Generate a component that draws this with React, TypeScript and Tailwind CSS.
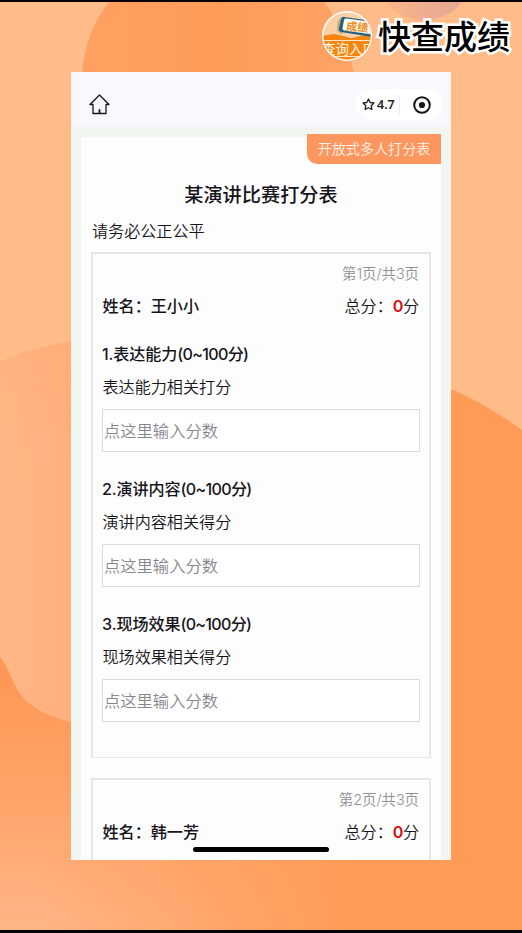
import React from 'react';

interface Criterion {
  title: string;
  range: string;
  hint: string;
}

interface Contestant {
  page: number;
  name: string;
  criteria: Criterion[];
}

const contestants: Contestant[] = [
  {
    page: 1,
    name: '王小小',
    criteria: [
      { title: '1.表达能力', range: '(0~100分)', hint: '表达能力相关打分' },
      { title: '2.演讲内容', range: '(0~100分)', hint: '演讲内容相关得分' },
      { title: '3.现场效果', range: '(0~100分)', hint: '现场效果相关得分' },
    ],
  },
  { page: 2, name: '韩一芳', criteria: [] },
];

function Backdrop() {
  return (
    <svg className="absolute inset-0 h-full w-full" viewBox="0 2 522 928" preserveAspectRatio="none">
      <defs>
        <linearGradient id="blob" x1="0" y1="0" x2="1" y2="0">
          <stop offset="0" stopColor="#ffb886" />
          <stop offset="1" stopColor="#ffae7a" />
        </linearGradient>
        <linearGradient id="blobTop" x1="0" y1="0" x2="0" y2="1">
          <stop offset="0" stopColor="#ffa870" stopOpacity="0.35" />
          <stop offset="0.4" stopColor="#ffb27d" stopOpacity="0" />
        </linearGradient>
        <linearGradient id="floor" x1="0" y1="657" x2="0" y2="930" gradientUnits="userSpaceOnUse">
          <stop offset="0" stopColor="#fe9654" />
          <stop offset="0.4" stopColor="#ffa064" />
          <stop offset="1" stopColor="#ffb584" />
        </linearGradient>
        <linearGradient id="floorRight" x1="40" y1="0" x2="360" y2="0" gradientUnits="userSpaceOnUse">
          <stop offset="0" stopColor="#ff9a57" stopOpacity="0" />
          <stop offset="1" stopColor="#ff9a57" />
        </linearGradient>
        <linearGradient id="sun" x1="0" y1="0" x2="1" y2="0">
          <stop offset="0" stopColor="#ffa163" />
          <stop offset="0.5" stopColor="#fe9b58" />
          <stop offset="1" stopColor="#ffa367" />
        </linearGradient>
        <linearGradient id="dusk" x1="0" y1="0" x2="1" y2="0">
          <stop offset="0" stopColor="#fbb488" />
          <stop offset="1" stopColor="#e2a795" />
        </linearGradient>
      </defs>
      <rect width="522" height="933" fill="#ffbb88" />
      <path d="M82 75C84 48 93 18 112 0H322C340 20 350 48 354 75Z" fill="url(#sun)" />
      <path d="M386 0H463C456 12 440 20 424 20C408 20 392 12 386 0Z" fill="url(#dusk)" />
      <path d="M0 361C28 350 52 344 80 340V730H0Z" fill="url(#blob)" />
      <path d="M0 361C28 350 52 344 80 340V730H0Z" fill="url(#blobTop)" />
      <path d="M0 657C10 668 13 691 30 704C43 714 56 719 75 723V850H522V933H0Z" fill="url(#floor)" />
      <path d="M75 850H522V933H0V850Z" fill="url(#floorRight)" />
      <path d="M445 387C472 397 498 413 522 430V933H445Z" fill="#ff9a57" />
    </svg>
  );
}

function AppLogo() {
  return (
    <svg className="h-[50px] w-[50px]" viewBox="0 0 50 50">
      <defs>
        <clipPath id="logoClip">
          <circle cx="25" cy="25" r="23.5" />
        </clipPath>
      </defs>
      <circle cx="25" cy="25" r="25" fill="#fff" />
      <g clipPath="url(#logoClip)">
        <rect width="50" height="50" fill="#fbd0a6" />
        <path d="M15 12Q17 6 24 6L20 24L15 20Z" fill="#d9ad72" />
        <path d="M0 25L12 23L30 27L50 22V50H0Z" fill="#f6860f" />
        <path d="M20 23L32 23L28 27Z" fill="#fbd0a6" />
        <path d="M22 6L50 10V26L19 21Q16 20 17 17L19 8Q20 5 22 6Z" fill="#1f6282" />
        <path d="M24 7.5L50 11V23.500L22 19.500Q20 19 20.500 17L22 9Q22.500 7 24 7.500Z" fill="#fffaf3" />
        <text x="24" y="19" fontSize="11" fontWeight="700" fill="#ee8b1d" fontFamily="Noto Sans CJK SC, sans-serif" transform="rotate(5 24 19)">成绩</text>
        <path d="M0 29.500H50" stroke="#fff1df" strokeWidth="0.9" />
        <path d="M0 45.500H50" stroke="#fff1df" strokeWidth="0.9" />
        <text x="0" y="43" fontSize="13.5" fill="#fff6e6" fontFamily="Noto Sans CJK SC, sans-serif">查询入口</text>
      </g>
    </svg>
  );
}

function NavBar() {
  return (
    <header className="flex h-[55px] shrink-0 items-center justify-between bg-[#faf8fc] pt-[10px] pr-[8px] pl-[18px]">
      <svg className="h-[21px] w-[21px]" viewBox="0 0 21 21" fill="none" stroke="#17151b" strokeWidth="1.3" strokeLinejoin="round" strokeLinecap="round">
        <path d="M10.5 1L1 10.5H4V19.5H17V10.5H20Z" />
        <path d="M10.5 16V19" strokeWidth="1.8" />
      </svg>
      <div className="flex h-[31px] w-[87px] items-center rounded-full bg-white">
        <svg className="ml-[6px] h-[13px] w-[13px]" viewBox="0 0 24 24" fill="none" stroke="#222" strokeWidth="2.5" strokeLinejoin="round">
          <path d="M12 2L15.1 8.3L22 9.3L17 14.2L18.2 21.2L12 18L5.8 21.2L7 14.2L2 9.3L8.9 8.3Z" />
        </svg>
        <span className="ml-[2px] w-[19px] pt-px font-['Noto_Sans'] text-[12.5px] leading-none font-semibold text-[#222]">4.7</span>
        <span className="ml-[3px] h-[20px] w-px bg-[#f0eef1]" />
        <svg className="ml-[13px] h-[18px] w-[18px]" viewBox="0 0 18 18">
          <circle cx="9" cy="9" r="7.8" fill="none" stroke="#17151b" strokeWidth="2" />
          <circle cx="9" cy="9" r="3.1" fill="#17151b" />
        </svg>
      </div>
    </header>
  );
}

function ScoreField({ title, range, hint }: Criterion) {
  return (
    <div className="mb-[20.8px]">
      <h3 className="-ml-px h-[33px] text-[16.1px] leading-[33px] font-medium tracking-[-0.1px] whitespace-nowrap">
        {title}
        <span className="tracking-[-0.7px]">{range}</span>
      </h3>
      <p className="-ml-[0.5px] h-[38px] text-[16.1px] leading-[33px] font-[350]">{hint}</p>
      <input
        className="-ml-px block h-[43px] w-[318px] border border-[#dcdadd] bg-white p-0 pt-px pl-px text-[16.3px] font-[350] outline-none placeholder:text-[#88868c] placeholder:opacity-100"
        placeholder="点这里输入分数"
      />
    </div>
  );
}

function ScoreCard({ page, name, criteria }: Contestant) {
  return (
    <section className="mb-[20px] h-[506px] shrink-0 border-t-2 border-r-2 border-b border-l-2 border-[#e7e6e8] pt-[6px] pr-[10px] pl-[10px]">
      <p className="h-[28px] text-right text-[14.4px] leading-[28px] font-[350] text-[#929095]">第{page}页/共3页</p>
      <div className="mb-[15px] flex h-[35px] items-center justify-between pt-px text-[16.1px]">
        <span className="-ml-[0.5px] font-medium">姓名：{name}</span>
        <span className="font-[350]">
          总分：<span className="font-semibold tracking-[-0.5px] text-[#d81012]">0</span>分
        </span>
      </div>
      {criteria.map((item) => (
        <ScoreField key={item.title} {...item} />
      ))}
    </section>
  );
}

export default function App() {
  return (
    <div className="relative h-[933px] w-[522px] overflow-hidden border-t-2 border-b-[3px] border-black bg-[#ffbb88] font-[Inter,'Noto_Sans_CJK_SC',sans-serif] text-[#17151b]">
      <Backdrop />
      <div className="relative flex h-[70px] items-start justify-end pt-[9px] pr-[12px]">
        <AppLogo />
        <h1 className="ml-[6px] text-[33px] leading-[52px] font-medium text-black [paint-order:stroke_fill] [-webkit-text-stroke:5px_white]">快查成绩</h1>
      </div>

      <div className="relative ml-[71px] flex h-[788px] w-[380px] flex-col overflow-hidden bg-[#f1f6f0]">
        <NavBar />
        <main className="relative mx-[10px] mt-[10px] flex flex-1 flex-col bg-[#fefdfe] px-[10px]">
          <div className="absolute -top-[3px] right-0 h-[30px] w-[134px] rounded-bl-[10px] bg-[#fe965f] text-center text-[14.1px] leading-[30px] font-[350] text-[#fff3e9]">开放式多人打分表</div>
          <h2 className="mt-[41px] h-[35px] shrink-0 text-center text-[19.2px] leading-[35px] font-medium">某演讲比赛打分表</h2>
          <p className="h-[39px] shrink-0 pl-px text-[16.1px] leading-[36px] font-[350]">请务必公正公平</p>
          {contestants.map((item) => (
            <ScoreCard key={item.page} {...item} />
          ))}
        </main>
        <div className="absolute bottom-[8px] left-[122px] h-[5px] w-[136px] rounded-full bg-black" />
      </div>
    </div>
  );
}
